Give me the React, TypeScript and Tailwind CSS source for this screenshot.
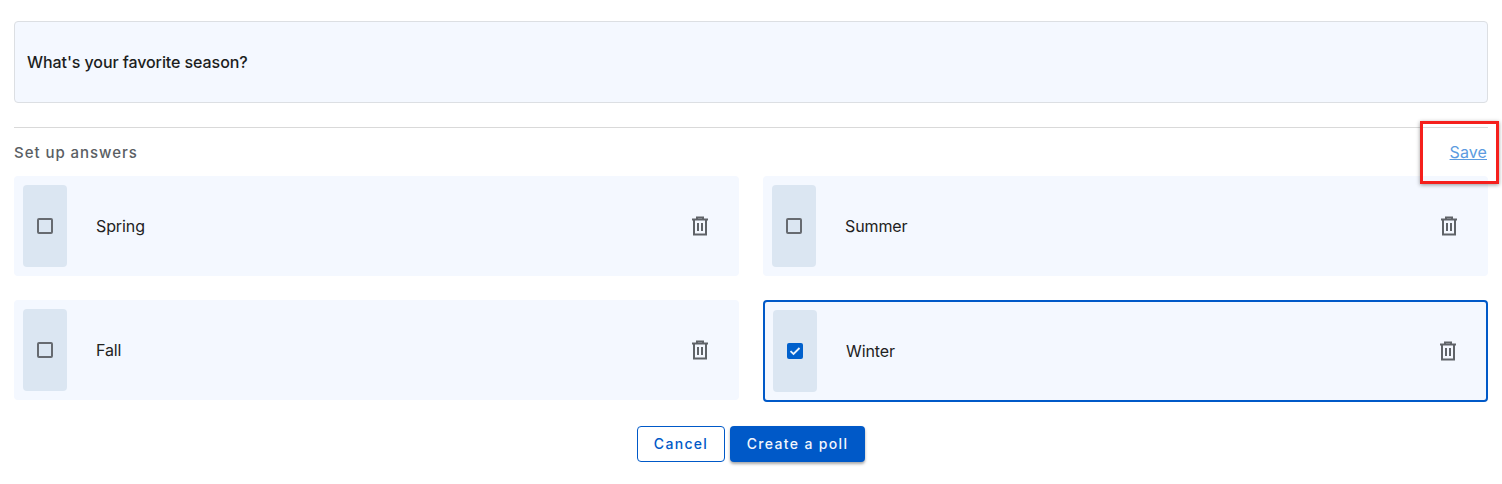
const answers = [
  { id: 'spring', label: 'Spring', checked: false },
  { id: 'summer', label: 'Summer', checked: false },
  { id: 'fall', label: 'Fall', checked: false },
  { id: 'winter', label: 'Winter', checked: true },
]

function TrashIcon() {
  return (
    <svg width="18" height="20" viewBox="0 0 18 20" fill="none" stroke="#5f6368" strokeWidth="2">
      <path d="M1 3.5h16" />
      <path d="M6 3V1.5h6V3" />
      <path d="M3 4v14.5h12V4" />
      <path d="M7 7v8M11 7v8" />
    </svg>
  )
}

function AnswerCard({ label, checked }: { label: string; checked: boolean }) {
  return (
    <div
      className={`flex items-center rounded bg-[#f4f8ff] ${
        checked ? 'border-2 border-[#0059c8] p-2' : 'p-[9px]'
      }`}
    >
      <div className="flex h-[82px] w-11 shrink-0 items-center justify-center rounded bg-[#dbe6f2]">
        {checked ? (
          <div className="flex h-4 w-4 items-center justify-center rounded-[2px] bg-[#0060cc]">
            <svg width="14" height="14" viewBox="0 0 14 14" fill="none" stroke="#e8f1fb" strokeWidth="1.8">
              <path d="M2.5 7.2l3 2.8 6-6" />
            </svg>
          </div>
        ) : (
          <div className="h-4 w-4 rounded-[2px] border-2 border-[#666a70]" />
        )}
      </div>
      <span className="ml-[29px] flex-1 text-base tracking-[-0.1px] text-[#222]">{label}</span>
      <div className="mr-[21px] flex">
        <TrashIcon />
      </div>
    </div>
  )
}

export default function App() {
  return (
    <div className="relative h-[484px] w-[1502px] bg-white px-[14px] pt-[21px] font-['Inter','Liberation_Sans',sans-serif]">
      <div className="flex h-[82px] items-center rounded border border-[#dcdfe3] bg-[#f4f8ff] px-3">
        <span className="text-base font-[450] tracking-[-0.08px] text-[#1c1e21]">What's your favorite season?</span>
      </div>

      <hr className="mt-6 border-[#d9d9d9]" />

      <div className="mt-[14px] flex h-5 items-center justify-between">
        <span className="translate-y-px text-[15px] font-[450] tracking-[0.95px] text-[#5a5e63]">Set up answers</span>
        <a className="pr-px text-base tracking-[0.1px] text-[#5b9be0] underline">Save</a>
      </div>

      <div className="mt-[14px] grid grid-cols-2 items-start gap-6">
        {answers.map(a => (
          <AnswerCard key={a.id} label={a.label} checked={a.checked} />
        ))}
      </div>

      <div className="mt-6 flex justify-center gap-[5px]">
        <button className="h-9 w-[88px] rounded border border-[#0059c8] bg-white text-sm font-[450] tracking-[1.3px] text-[#0059c8]">
          Cancel
        </button>
        <button className="h-9 w-[135px] rounded bg-[#0059c8] text-sm font-[450] tracking-[1.35px] text-[#f2f6fc] shadow-[0_2px_3px_rgba(0,0,0,0.35)]">
          Create a poll
        </button>
      </div>

      {/* annotation box around Save */}
      <div className="absolute left-[1420px] top-[121px] h-[63px] w-[79px] border-[3px] border-[#f5201c] shadow-[0_1px_4px_rgba(0,0,0,0.4)]" />
    </div>
  )
}
